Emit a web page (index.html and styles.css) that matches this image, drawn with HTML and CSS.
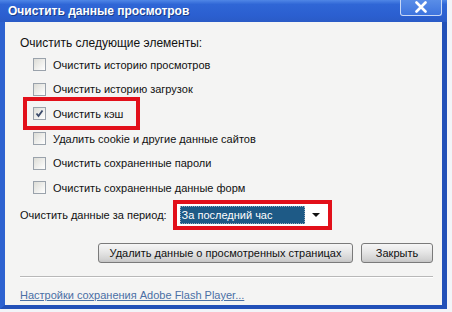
FILE: index.html
```html
<!DOCTYPE html>
<html lang="ru">
<head>
<meta charset="utf-8">
<link rel="stylesheet" href="styles.css">
</head>
<body>
<div class="screen">
  <div class="window">
    <div class="titlebar">
      <span class="title">Очистить данные просмотров</span>
      <span class="close"><svg width="16" height="12" viewBox="0 0 16 12"><path d="M3.5 1.5 L12.5 10.5 M12.5 1.5 L3.5 10.5" stroke="#fff" stroke-width="2.6" stroke-linecap="round"/></svg></span>
    </div>
    <div class="body">
      <div class="heading">Очистить следующие элементы:</div>
      <ul class="options">
        <li class="opt"><span class="cb"></span><span>Очистить историю просмотров</span></li>
        <li class="opt"><span class="cb"></span><span>Очистить историю загрузок</span></li>
        <li class="opt"><span class="mark-row"><span class="cb checked"><svg width="11" height="11" viewBox="0 0 11 11"><path d="M2.5 5.5 L4.5 8 L8.5 2.5" fill="none" stroke="#3a4a6a" stroke-width="1.8"/></svg></span><span>Очистить кэш</span></span></li>
        <li class="opt"><span class="cb"></span><span>Удалить cookie и другие данные сайтов</span></li>
        <li class="opt"><span class="cb"></span><span>Очистить сохраненные пароли</span></li>
        <li class="opt"><span class="cb"></span><span>Очистить сохраненные данные форм</span></li>
      </ul>
      <div class="period">
        <span class="period-label">Очистить данные за период:</span>
        <span class="mark-select">
          <span class="select">
            <span class="sel-val">За последний час</span>
            <span class="arrow"></span>
          </span>
        </span>
      </div>
      <div class="buttons">
        <button class="btn btn-wide">Удалить данные о просмотренных страницах</button>
        <button class="btn btn-close">Закрыть</button>
      </div>
      <div class="sep"></div>
      <a class="link" href="#">Настройки сохранения Adobe Flash Player...</a>
    </div>
  </div>
</div>
</body>
</html>
```

FILE: styles.css
```css
html, body {
  margin: 0;
  padding: 0;
  background: #ffffff;
}
.screen {
  width: 452px;
  height: 312px;
  overflow: hidden;
  background: #f2f4f8;
}
.window {
  width: 447px;
  height: 309px;
  display: flex;
  flex-direction: column;
  font-family: "Liberation Sans", Arial, sans-serif;
  font-size: 11px;
  color: #111;
}
.titlebar {
  height: 22px;
  flex: none;
  display: flex;
  align-items: flex-start;
  justify-content: space-between;
  background: linear-gradient(#4f86e6 0%, #2f66d6 20%, #2b5fd0 70%, #2a5bc6 100%);
  padding-left: 8px;
}
.title {
  color: #fff;
  font-weight: bold;
  font-size: 12px;
  line-height: 22px;
  text-shadow: 1px 1px 0 #1a3d8a;
}
.close {
  width: 42px;
  height: 17px;
  margin-right: 5px;
  margin-top: -1px;
  box-sizing: border-box;
  border: 1px solid #c8d8f6;
  border-top: none;
  border-radius: 0 0 3px 3px;
  background: linear-gradient(#5b8fe8, #3e74de);
  display: flex;
  align-items: center;
  justify-content: center;
}
.body {
  flex: 1;
  background: #f4f4f3;
  border-left: 5px solid #2d62d0;
  border-right: 5px solid #2250b8;
  border-bottom: 4px solid #2250b8;
  padding: 13px 9px 0 15px;
  display: flex;
  flex-direction: column;
}
.heading {
  font-size: 12px;
  line-height: 16px;
  height: 16px;
}
.options {
  list-style: none;
  margin: 1.5px 0 0 0;
  padding: 0;
}
.opt {
  height: 24.6px;
  display: flex;
  align-items: center;
  padding-left: 13px;
}
.cb {
  width: 13px;
  height: 13px;
  box-sizing: border-box;
  border: 1px solid #9aa2ab;
  background: linear-gradient(135deg, #dcdcd6, #ffffff);
  margin-right: 7px;
  flex: none;
  display: flex;
  align-items: center;
  justify-content: center;
}
.mark-row {
  display: flex;
  align-items: center;
  margin-left: -10px;
  padding: 4px 13px 4px 6px;
  border: 4px solid #e2101a;
  height: 17px;
}
.period {
  height: 30px;
  display: flex;
  align-items: center;
}
.period-label {
  margin-right: 6px;
}
.mark-select {
  width: 159px;
  height: 30px;
  box-sizing: border-box;
  border: 4px solid #e2101a;
  display: flex;
}
.select {
  flex: 1;
  background: #fff;
  display: flex;
  align-items: center;
  padding: 2px 3px;
}
.sel-val {
  width: 125px;
  height: 18px;
  box-sizing: border-box;
  background: #1e5a86;
  color: #fff;
  border: 1px dotted #9ab;
  line-height: 16px;
  padding-left: 1px;
}
.arrow {
  margin-left: 7px;
  width: 0;
  height: 0;
  border-left: 4px solid transparent;
  border-right: 4px solid transparent;
  border-top: 4px solid #111;
}
.buttons {
  margin-top: 13px;
  display: flex;
  justify-content: flex-end;
  gap: 8px;
}
.btn {
  height: 20px;
  box-sizing: border-box;
  border: 1px solid #7a7a7a;
  border-radius: 3px;
  background: linear-gradient(#f6f6f6, #e6e6e6 45%, #d2d2d2 85%, #c4c4c4 100%);
  font-family: "Liberation Sans", Arial, sans-serif;
  font-size: 11px;
  color: #111;
  padding: 0;
}
.btn-wide { width: 255px; }
.btn-close { width: 72px; }
.sep {
  margin-top: 13px;
  height: 1px;
  background: #b8b8b8;
  border-bottom: 1px solid #fff;
}
.link {
  margin-top: 9px;
  line-height: 16px;
  color: #4a6fa5;
  text-decoration: underline;
  align-self: flex-start;
}
```
